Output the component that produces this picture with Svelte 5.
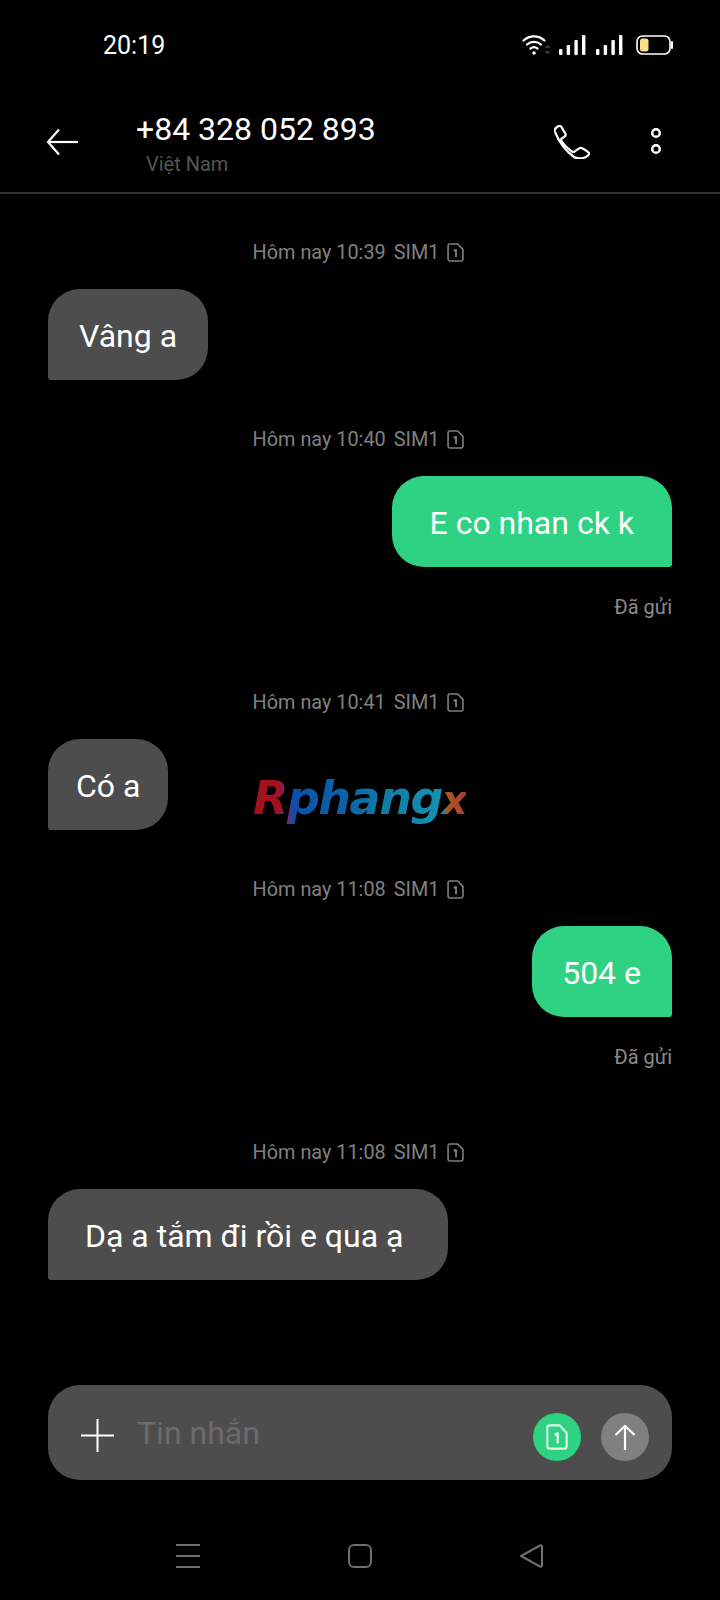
<script>
  const thread = [
    { time: '10:39', from: 'them', text: 'Vâng a', left: 31, right: 31 },
    { time: '10:40', from: 'me', text: 'E co nhan ck k', left: 38, right: 38 },
    { time: '10:41', from: 'them', text: 'Có a', left: 28, right: 28 },
    { time: '11:08', from: 'me', text: '504 e', left: 30, right: 31 },
    { time: '11:08', from: 'them', text: 'Dạ a tắm đi rồi e qua ạ', left: 37, right: 45 }
  ];
</script>

{#snippet simIcon(w, h)}
  <svg width={w} height={h} viewBox="0 0 16 18" preserveAspectRatio="none" fill="none" stroke="currentColor" stroke-width="1.5" stroke-linejoin="round">
    <path d="M2.500 1h7.500l5 5v9.500a1.500 1.500 0 0 1-1.500 1.500h-11A1.500 1.500 0 0 1 1 15.500V2.500A1.500 1.500 0 0 1 2.500 1z" />
    <path d="M6.300 7.500 8.500 6.500v7" stroke-width="1.700" />
  </svg>
{/snippet}

<div class="screen">
  <div class="status">
    <span class="clock">20:19</span>
    <div class="status-icons">
      <svg width="28" height="22" viewBox="0 0 28 22" fill="none" stroke="#fff" stroke-width="2.200" stroke-linecap="round">
        <path d="M1.500 6.500C7.500 1 16.500 1 22.500 6.500" />
        <path d="M5 10.500C9 7 15 7 19 10.500" />
        <path d="M8.500 14.500C10.500 13 13.500 13 15.500 14.500" />
        <circle cx="12" cy="19" r="1.800" fill="#fff" stroke="none" />
        <path d="M24 13.500l1.500-1.500 1.500 1.500M24 17.500l1.500 1.500 1.500-1.500" stroke="#555" stroke-width="1.200" />
      </svg>
      <svg class="bars" width="28" height="20" viewBox="0 0 28 20" fill="#fff">
        <rect x="0" y="14" width="3.400" height="6" rx="1" />
        <rect x="7.700" y="10" width="3.400" height="10" rx="1" />
        <rect x="15.400" y="5" width="3.400" height="15" rx="1" />
        <rect x="23" y="0" width="3.400" height="20" rx="1" />
      </svg>
      <svg class="bars" width="28" height="20" viewBox="0 0 28 20" fill="#fff">
        <rect x="0" y="14" width="3.400" height="6" rx="1" />
        <rect x="7.700" y="10" width="3.400" height="10" rx="1" />
        <rect x="15.400" y="5" width="3.400" height="15" rx="1" />
        <rect x="23" y="0" width="3.400" height="20" rx="1" />
      </svg>
      <svg class="battery" width="38" height="20" viewBox="0 0 38 20" fill="none">
        <rect x="1" y="1" width="33" height="18" rx="5.500" stroke="#fff" stroke-width="1.600" />
        <rect x="4" y="3.500" width="8.500" height="13" rx="2.500" fill="#fbdd87" />
        <path d="M36 7v6" stroke="#fff" stroke-width="2" stroke-linecap="round" />
      </svg>
    </div>
  </div>

  <header class="topbar">
    <svg class="back" width="34" height="28" viewBox="0 0 34 28" fill="none" stroke="#fff" stroke-width="2.200">
      <path d="M33 14H3" />
      <path d="M14 1.500 3 14l11 12.500" />
    </svg>
    <div class="who">
      <div class="number">+84 328 052 893</div>
      <div class="country">Việt Nam</div>
    </div>
    <svg class="phone" width="36" height="34" viewBox="0 0 36 34" fill="none" stroke="#fff" stroke-width="2.200" stroke-linejoin="round">
      <path d="M1 7C0 5 1 3.500 3 2 5 .5 6.500 .5 7.500 2l4 7c.5 1.200 0 2-1 2.700l-4 2.800" />
      <path d="M1 7C5 17 12 26 20 32c1.500 1 5 1.500 9 1 3-.5 6.500-3 6-5-.5-1-5-4-7.500-5-1.500-.5-2.500 0-5.500 2.500L19.500 27.500" />
      <path d="M6.500 14.500C10 20 14 24 19.500 27.500" />
    </svg>
    <svg class="more" width="14" height="28" viewBox="0 0 14 28" fill="none" stroke="#fff" stroke-width="2.400">
      <circle cx="7" cy="6" r="3.800" />
      <circle cx="7" cy="22" r="3.800" />
    </svg>
  </header>

  <main class="thread">
    {#each thread as msg}
      <div class="stamp">
        <span>Hôm nay {msg.time}</span>
        <span>SIM1</span>
        {@render simIcon(17, 19)}
      </div>
      <div class="row {msg.from}">
        <div class="bubble" style="padding: 0 {msg.right}px 0 {msg.left}px">{msg.text}</div>
      </div>
      {#if msg.from === 'me'}
        <div class="sent">Đã gửi</div>
      {/if}
    {/each}
    <div class="watermark">Rphang<span class="w-x">x</span></div>
  </main>

  <div class="composer">
    <svg class="plus" width="33" height="33" viewBox="0 0 33 33" stroke="#fff" stroke-width="2">
      <path d="M16.500 0v33M0 16.500h33" />
    </svg>
    <span class="hint">Tin nhắn</span>
    <span class="round sim">{@render simIcon(22, 26)}</span>
    <span class="round send">
      <svg width="22" height="26" viewBox="0 0 22 26" fill="none" stroke="#fff" stroke-width="2.200">
        <path d="M11 26V2" />
        <path d="M1.500 11 11 2l9.500 9" />
      </svg>
    </span>
  </div>

  <nav class="navbar">
    <svg width="26" height="26" viewBox="0 0 26 26" stroke="#6e6e6e" stroke-width="2">
      <path d="M1 2h24M1 13h24M1 24h24" />
    </svg>
    <svg width="26" height="26" viewBox="0 0 26 26" fill="none" stroke="#6e6e6e" stroke-width="2">
      <rect x="2" y="2" width="22" height="22" rx="5" />
    </svg>
    <svg width="26" height="26" viewBox="0 0 26 26" fill="none" stroke="#6e6e6e" stroke-width="2" stroke-linejoin="round">
      <path d="M2 13 21 2.500c1-.4 2 .2 2 1.200v18.600c0 1-1 1.600-2 1.200z" />
    </svg>
  </nav>
</div>

<style>
  :global(body) {
    margin: 0;
    background: #000;
  }
  .screen {
    width: 720px;
    height: 1600px;
    background: #000;
    color: #fff;
    font-family: Roboto, "Noto Sans", sans-serif;
    display: flex;
    flex-direction: column;
    overflow: hidden;
  }
  .status {
    height: 90px;
    box-sizing: border-box;
    padding: 31px 46px 0 103px;
    display: flex;
    justify-content: space-between;
    align-items: flex-start;
  }
  .clock {
    font-size: 25px;
    line-height: 30px;
  }
  .status-icons {
    display: flex;
    align-items: center;
    gap: 9px;
    height: 30px;
    margin-top: -1px;
  }
  .battery {
    margin-left: 3px;
  }
  .topbar {
    height: 104px;
    box-sizing: border-box;
    border-bottom: 2px solid #333;
    display: flex;
    align-items: center;
    padding: 0 57px 0 45px;
  }
  .back {
    margin-top: 1px;
  }
  .who {
    margin-left: 57px;
    flex: 1;
    margin-top: 5px;
  }
  .number {
    font-size: 32px;
    line-height: 38px;
  }
  .country {
    font-size: 20px;
    line-height: 26px;
    color: #555;
    margin-left: 10px;
    margin-top: 3px;
  }
  .phone {
    margin: 1px 59px 0 0;
  }
  .thread {
    position: relative;
    flex: 1;
    padding: 46px 48px 0 48px;
  }
  .stamp {
    display: flex;
    justify-content: center;
    align-items: center;
    gap: 8px;
    height: 24px;
    padding-right: 3px;
    font-size: 19.850px;
    color: #808080;
    margin-bottom: 25px;
  }
  .row {
    display: flex;
    margin-bottom: 47px;
  }
  .row.me {
    justify-content: flex-end;
    margin-bottom: 0;
  }
  .bubble {
    height: 91px;
    line-height: 94px;
    font-size: 32px;
    white-space: nowrap;
  }
  .them .bubble {
    background: #4d4d4d;
    border-radius: 32px 32px 32px 3px;
  }
  .me .bubble {
    background: #2fd182;
    border-radius: 32px 32px 3px 32px;
  }
  .sent {
    text-align: right;
    font-size: 20px;
    line-height: 24px;
    color: #8a8a8a;
    margin: 28px 0 71px;
  }
  .watermark {
    position: absolute;
    left: 253px;
    top: 577px;
    font-family: "DejaVu Sans", sans-serif;
    font-size: 46px;
    font-weight: 700;
    font-style: italic;
    line-height: 54px;
    letter-spacing: -1.500px;
    background: linear-gradient(90deg, #a5101c 0, #a5101c 24px, #6a2a80 36px, #0d4fa8 40px, #0b63a8 90px, #117fa6 140px, #1593b0 192px, #a85a22 193px, #a83a30 214px);
    background-clip: text;
    -webkit-background-clip: text;
    color: transparent;
  }
  .w-x {
    font-size: 40px;
  }
  .composer {
    margin: 0 48px;
    height: 95px;
    background: #4d4d4d;
    border-radius: 32px;
    display: flex;
    align-items: center;
    padding: 0 23px 0 33px;
  }
  .plus {
    flex: none;
    margin-top: 6px;
  }
  .hint {
    flex: 1;
    margin-left: 23px;
    font-size: 32px;
    color: #6b6b6b;
  }
  .round {
    width: 48px;
    height: 48px;
    border-radius: 50%;
    display: flex;
    align-items: center;
    justify-content: center;
    margin-top: 8px;
  }
  .sim {
    background: #2fd182;
    color: #dff7ec;
    margin-right: 20px;
  }
  .send {
    background: #808080;
  }
  .navbar {
    height: 120px;
    display: flex;
    justify-content: center;
    gap: 146px;
    padding-top: 63px;
    box-sizing: border-box;
  }
</style>
